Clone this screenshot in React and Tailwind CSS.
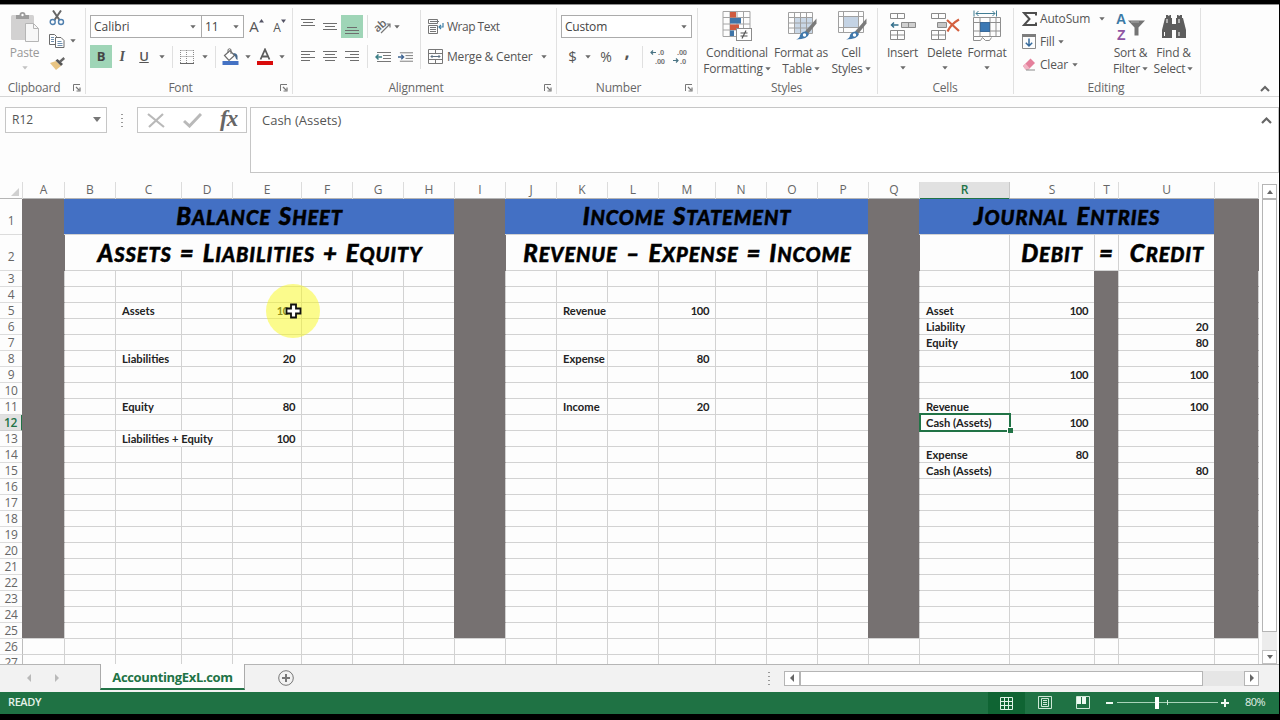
import React from 'react';
import clsx from 'clsx';

const COLUMNS = ['A', 'B', 'C', 'D', 'E', 'F', 'G', 'H', 'I', 'J', 'K', 'L', 'M', 'N', 'O', 'P', 'Q', 'R', 'S', 'T', 'U', 'V'];

const ROW_GRID =
  'grid grid-cols-[23px_42px_51px_66px_51px_69px_51px_51px_51px_51px_51px_51px_51px_57px_51px_51px_51px_51px_90px_85px_24px_96px_44px]';

const CELLS = {
  C5: 'Assets', E5: '100', K5: 'Revenue', M5: '100', R5: 'Asset', S5: '100',
  R6: 'Liability', U6: '20',
  R7: 'Equity', U7: '80',
  C8: 'Liabilities', E8: '20', K8: 'Expense', M8: '80',
  S9: '100', U9: '100',
  C11: 'Equity', E11: '80', K11: 'Income', M11: '20', R11: 'Revenue', U11: '100',
  R12: 'Cash (Assets)', S12: '100',
  C13: 'Liabilities + Equity', E13: '100',
  R14: 'Expense', S14: '80',
  R15: 'Cash (Assets)', U15: '80',
};

// text in these cells runs over the border on their right
const OVERFLOWING = ['C13', 'K5'];

const isDivider = (col, row) =>
  row <= 25 && (['A', 'I', 'Q', 'V'].includes(col) || (col === 'T' && row > 2));

/* ---------- small pieces ---------- */

const Caret = ({ className = '' }) => (
  <svg viewBox="0 0 6 4" className={clsx('w-[6px] h-[4px] shrink-0', className)}>
    <path d="M0.3 0.3h5.4L3 3.5z" fill="#6b6b6b" />
  </svg>
);

const Slot = ({ className = '', children }) => (
  <div className={clsx('flex h-full shrink-0 items-center justify-center', className)}>{children}</div>
);

const Separator = ({ className = '' }) => <div className={clsx('w-px shrink-0 bg-[#e0e0e0]', className)} />;

const Launcher = () => (
  <svg viewBox="0 0 8 8" className="absolute right-[4px] bottom-[2px] h-[8px] w-[8px]" fill="none" stroke="#777">
    <path d="M0.5 7V0.5H7" />
    <path d="M3 3l3 3M7 3.5V7H3.5" strokeWidth="1.2" />
  </svg>
);

const Group = ({ label, width, launcher, labelClass = '', children }) => (
  <div className={clsx('relative h-[86px] shrink-0 border-r border-[#e1e1e1]', width)}>
    {children}
    <div className={clsx('absolute inset-x-0 -bottom-px text-center leading-[14px] text-[#666]', labelClass)}>{label}</div>
    {launcher && <Launcher />}
  </div>
);

const Lines = ({ rows, className = '' }) => (
  <svg viewBox="0 0 14 14" className={clsx('h-[14px] w-[14px]', className)} stroke="#6e6e6e">
    {rows.map(([x1, x2, y]) => (
      <path key={y} d={`M${x1} ${y}H${x2}`} />
    ))}
  </svg>
);

const BigButton = ({ icon, lines, className = '', caretBelow }) => (
  <div className={clsx('flex shrink-0 flex-col items-center', className)}>
    <div className="flex h-[36px] items-center justify-center">{icon}</div>
    <div className="mt-[1px] leading-[16px] whitespace-nowrap">{lines[0]}</div>
    <div className="flex h-[16px] items-center gap-[2px] leading-[16px] whitespace-nowrap">
      {!caretBelow && lines[1]}
      <Caret className={caretBelow ? '-mt-[2px]' : '-mt-[1px]'} />
    </div>
  </div>
);

/* ---------- icons ---------- */

const PasteIcon = () => (
  <svg viewBox="0 0 30 30" className="h-[30px] w-[30px]">
    <rect x="1" y="3" width="23" height="25" rx="1.5" fill="#d2d1d1" />
    <path d="M6 3h3.500a3 3 0 0 1 6 0H19v4H6z" fill="#9c9c9c" />
    <circle cx="12.500" cy="3" r="1.200" fill="#fff" />
    <path d="M15.500 11.500h8l5 5v13h-13z" fill="#f7f7f7" stroke="#b5b5b5" />
    <path d="M23.500 11.500v5h5" fill="none" stroke="#b5b5b5" />
  </svg>
);

const ScissorsIcon = () => (
  <svg viewBox="0 0 16 16" className="h-[16px] w-[16px]" fill="none">
    <path d="M4 0.500L10.500 10M12 0.500L5.500 10" stroke="#666" strokeWidth="2" />
    <circle cx="3.700" cy="12" r="2.500" stroke="#4f7fae" strokeWidth="1.400" />
    <circle cx="12" cy="12" r="2.500" stroke="#4f7fae" strokeWidth="1.400" />
  </svg>
);

const CopyIcon = () => (
  <svg viewBox="0 0 16 16" className="h-[16px] w-[16px]" fill="#fff" stroke="#6c6c6c">
    <path d="M0.500 1.500h5l2 2v8h-7z" />
    <path d="M2 4.500h3M2 6.500h3M2 8.500h3" stroke="#6f8fae" />
    <path d="M6.500 4.500h5.500l3 3v7H6.500z" />
    <path d="M8.500 8.500h4M8.500 10.500h5M8.500 12.500h5" stroke="#6f8fae" />
  </svg>
);

const BrushIcon = () => (
  <svg viewBox="0 0 17 14" className="h-[14px] w-[17px]">
    <path d="M1 7l6-2 5 5-5 4z" fill="#e9c583" />
    <path d="M6.500 4.500l2-1.500 5.500 5-2 2z" fill="#555" />
    <path d="M10 5l4.500-4 1.500 2-4 3.500z" fill="#666" />
  </svg>
);

const BordersIcon = () => (
  <svg viewBox="0 0 14 14" className="h-[14px] w-[14px]" fill="none" stroke="#8a8a8a">
    <path d="M0.500 0.500h13M0.500 6.500h13M0.500 0v13M6.500 0v13M13.500 0v13" strokeDasharray="1 1" />
    <path d="M0 13.500h14" stroke="#666" />
  </svg>
);

const FillIcon = () => (
  <svg viewBox="0 0 17 17" className="h-[17px] w-[17px]">
    <path d="M2.500 7.500L8 2.500l4.500 5-5.500 5z" fill="#fff" stroke="#6d6d6d" strokeWidth="1.200" />
    <path d="M6 5V1.500q1.500-1.500 3 0V6" fill="none" stroke="#6d6d6d" />
    <path d="M11 5q4 0 4.500 3v4q-2-1-2.500-4z" fill="#47678a" />
    <rect x="0.500" y="13" width="16" height="4" fill="#4472c4" />
  </svg>
);

const FontColorIcon = () => (
  <svg viewBox="0 0 16 17" className="h-[17px] w-[16px]">
    <path d="M3.500 11.500L8 1.500l4.500 10M5 8.500h6" fill="none" stroke="#5c5c5c" strokeWidth="1.800" />
    <rect y="13" width="16" height="4" fill="#d90b0b" />
  </svg>
);

const OrientationIcon = () => (
  <svg viewBox="0 0 17 16" className="h-[16px] w-[17px] overflow-visible">
    <text x="0" y="11" fontSize="11" fontFamily="Open Sans, sans-serif" fontWeight="600" fill="#666" transform="rotate(-42 5 9)">ab</text>
    <path d="M6 14L15 5M11.500 5H15v3.500" fill="none" stroke="#777" strokeWidth="1.200" />
  </svg>
);

const IndentIcon = ({ out }) => (
  <svg viewBox="0 0 16 12" className="h-[12px] w-[16px]" fill="none">
    <path d="M2 1.500h14M8 4.500h8M8 7.500h8M2 10.500h14" stroke="#777" />
    <path d={out ? 'M7 6H1M3.500 3.500L1 6l2.500 2.500' : 'M0 6h6M3.500 3.500L6 6L3.500 8.500'} stroke={out ? '#3d7f86' : '#3f6593'} strokeWidth="1.500" />
  </svg>
);

const WrapIcon = () => (
  <svg viewBox="0 0 16 16" className="h-[16px] w-[16px]" fill="none" stroke="#767676">
    <path d="M0.500 0.500h9v4h-9zM2 2.500h9M0.500 6.500h9v8h-9zM2 8.500h6M2 10.500h6M2 12.500h6" />
    <path d="M15 4v4h-3.500M13 6l-2 2 2 2" stroke="#3f7fa5" strokeWidth="1.200" />
  </svg>
);

const MergeIcon = () => (
  <svg viewBox="0 0 16 16" className="h-[16px] w-[16px]" fill="none" stroke="#777">
    <path d="M0.500 0.500h14v14h-14zM0.500 4.500h14M0.500 10.500h14M7.500 0v4M7.500 11v4" />
    <path d="M3 7.500h9M4.500 6L3 7.500 4.500 9M10.500 6L12 7.500 10.500 9" stroke="#5d6f80" />
  </svg>
);

const DecimalIcon = ({ top, bottom, left }) => (
  <svg viewBox="0 0 16 15" className="h-[15px] w-[16px] overflow-visible" fontSize="7.500" fontFamily="Liberation Sans, sans-serif" fontWeight="700" fill="#777">
    <text x={left ? 8 : 5} y="6">{top}</text>
    <text x={left ? 5 : 8} y="14.500">{bottom}</text>
    <path d={left ? 'M6 3.500H1M3 1.500L1 3.500l2 2' : 'M1 11.500h5M4 9.500l2 2-2 2'} fill="none" stroke="#4a7484" strokeWidth="1.200" />
  </svg>
);

const ConditionalIcon = () => (
  <svg viewBox="0 0 30 31" className="h-[31px] w-[30px]">
    <path d="M1 0.500h27v25H1zM1 6.500h27M1 13h27M1 19h27M8 0v25M15 0v25M21.500 0v25" fill="none" stroke="#a4a4a4" />
    <rect x="8" y="1" width="6" height="5.500" fill="#cf5b3f" />
    <rect x="8" y="7" width="11" height="5.500" fill="#3f75a8" />
    <rect x="8" y="13.500" width="9" height="5.500" fill="#cf5b3f" />
    <rect x="8" y="19.500" width="4" height="5.500" fill="#3f75a8" />
    <rect x="14.500" y="17.500" width="15" height="12" fill="#fff" stroke="#8c8c8c" />
    <path d="M18.500 22h7M18.500 25h7M24 19.500l-4 8" stroke="#555" strokeWidth="1.200" />
  </svg>
);

const StyleBrush = () => (
  <>
    <path d="M28.500 7.500v5L20 23l-3-2.500z" fill="#7a7a7a" />
    <path d="M18.500 20.500l2.500 2.500q-1 5-13 5.500 4-1.500 4-4.500 2-4 6.500-3.500z" fill="#4078ab" />
    <circle cx="16.500" cy="24" r="1.700" fill="#fff" />
  </>
);

const TableIcon = () => (
  <svg viewBox="0 0 30 30" className="ml-[3px] h-[30px] w-[30px]">
    <rect x="6" y="7" width="19" height="15" fill="#c9d7e6" />
    <path d="M0.500 1.500h24v21h-24zM0.500 6.500h24M0.500 12h24M0.500 17h24M6.500 1.500v21M12.500 1.500v21M18.500 1.500v21" fill="none" stroke="#a0a0a0" />
    <StyleBrush />
  </svg>
);

const CellStyleIcon = () => (
  <svg viewBox="0 0 30 30" className="ml-[3px] h-[30px] w-[30px]">
    <path d="M0.500 0.500h25v21h-25zM0.500 5.500h25M0.500 16.500h25M5.500 0v21M20.500 0v21" fill="none" stroke="#a0a0a0" />
    <rect x="6" y="6" width="14" height="10" fill="#c4d3e4" />
    <StyleBrush />
  </svg>
);

const InsertIcon = () => (
  <svg viewBox="0 0 28 29" className="h-[29px] w-[28px]" fill="none" stroke="#8a8a8a">
    <path d="M1.500 1.500h14v5h-14zM8.500 1.500v5M1.500 18.500h14v9h-14zM8.500 18.500v9M1.500 23h14" />
    <path d="M12.500 10.500h14v5h-14zM19.500 10.500v5" fill="#cfcfcf" />
    <path d="M9.500 13H2.500M5 10.500L2.500 13 5 15.500" stroke="#35708c" strokeWidth="1.500" />
  </svg>
);

const DeleteIcon = () => (
  <svg viewBox="0 0 30 29" className="h-[29px] w-[30px]" fill="none" stroke="#8a8a8a">
    <path d="M1.500 1.500h14v5h-14zM8.500 1.500v5M1.500 18.500h14v9h-14zM8.500 18.500v9M1.500 23h14" />
    <path d="M7.500 10.500h9v5h-9z" fill="#c6c6c6" />
    <path d="M17 8l12 11M29 7.500Q21 12 17.500 19.500" stroke="#d4603f" strokeWidth="2.200" />
  </svg>
);

const FormatIcon = () => (
  <svg viewBox="0 0 28 32" className="h-[32px] w-[28px]" fill="none" stroke="#8f8f8f">
    <path d="M0.500 7.500h27v19h-27zM0.500 12.500h27M0.500 21h27M7 7.500v19M17 7.500v19M23 7.500v19" />
    <path d="M0.500 26.500v4h7l2-3 3 3h4l2-3" />
    <rect x="7.500" y="12.500" width="9" height="9" fill="#3b78b4" stroke="#3b6a99" />
    <path d="M3 3.500h19M5.500 1L3 3.500 5.500 6M19.500 1L22 3.500 19.500 6M1 0.500v6M23.500 0.500v6" stroke="#417d93" />
  </svg>
);

const SigmaIcon = () => (
  <svg viewBox="0 0 15 14" className="h-[14px] w-[15px]" fill="none" stroke="#4e4e4e" strokeWidth="2">
    <path d="M14 3.500V1H2l5.500 6L2 13h12v-2.500" />
  </svg>
);

const FillDownIcon = () => (
  <svg viewBox="0 0 14 15" className="h-[15px] w-[14px]" fill="none">
    <path d="M0.500 0.500h13v14H0.500z" stroke="#8a8a8a" />
    <rect width="14" height="3" fill="#7d7d7d" />
    <path d="M7 4.500v7.500M3.800 8.800L7 12l3.200-3.200" stroke="#35699b" strokeWidth="1.500" />
  </svg>
);

const EraserIcon = () => (
  <svg viewBox="0 0 14 13" className="h-[13px] w-[14px]">
    <path d="M1 8L8.500 0.500l4.500 4.500-6.500 6.500H3.500z" fill="#e5809c" />
    <path d="M1 8l2.500-2.500 4 4.500-1.500 1.500H3.500z" fill="#f1b4c4" />
    <path d="M4 12h9" stroke="#8a8a8a" />
  </svg>
);

const SortFilterIcon = () => (
  <svg viewBox="0 0 29 29" className="h-[29px] w-[29px] overflow-visible" fontFamily="Liberation Sans, sans-serif" fontWeight="700" fontSize="14">
    <text x="0" y="11.500" fill="#3c7aa6">A</text>
    <text x="1" y="28" fill="#8f55a3">Z</text>
    <path d="M12 8.500h17l-6.500 7v8h-4v-8z" fill="#747474" />
    <path d="M15 10h8" stroke="#aaa" />
  </svg>
);

const BinocularsIcon = () => (
  <svg viewBox="0 0 26 25" className="h-[25px] w-[26px]" fill="#5d5d5d">
    <path d="M5 1h5v3h1v6h4V4h1V1h5v3h1l3 12v8H15v-8h-4v8H1v-8L4 4h1z" />
    <path d="M3.500 18v4M18 18v4M6 5v4M18 5v4" stroke="#fff" />
    <path d="M7 1.500h1.500M17.500 1.500H19" stroke="#ccc" />
  </svg>
);

/* ---------- ribbon ---------- */

const Ribbon = () => (
  <div className="flex h-[93px] shrink-0 border-t border-b border-t-[#8f8f8f] border-b-[#d5d5d5] pt-[3px] text-[12px] tracking-[-0.2px] text-[#555]">
    <Group label="Clipboard" width="w-[86px]" labelClass="pr-[17px]" launcher>
      <div className="flex">
        <div className="flex w-[49px] flex-col items-center pt-[4px] text-[#999]">
          <PasteIcon />
          <div className="mt-[3px] h-[16px] leading-[16px]">Paste</div>
          <Caret className="mt-[5px] opacity-40" />
        </div>
        <div className="flex flex-col pt-[2px]">
          <ScissorsIcon />
          <div className="mt-[7px] flex items-center gap-[5px]">
            <CopyIcon />
            <Caret />
          </div>
          <div className="mt-[7px]"><BrushIcon /></div>
        </div>
      </div>
    </Group>

    <Group label="Font" width="w-[207px]" labelClass="pr-[17px]" launcher>
      <div className="flex h-[23px] pl-[4px] mt-[7px]">
        <div className="flex w-[112px] items-center justify-between border border-[#ababab] bg-white pr-[5px] pl-[3px] tracking-normal text-[#444]">
          Calibri <Caret />
        </div>
        <div className="-ml-px flex w-[43px] items-center justify-between border border-[#ababab] bg-white pr-[4px] pl-[3px] text-[#444]">
          11 <Caret />
        </div>
        <Slot className="w-[25px]">
          <span className="text-[15px]">A</span>
          <svg viewBox="0 0 5 4" className="mb-[12px] h-[4px] w-[5px]"><path d="M0 3.500L2.500 0 5 3.500z" fill="#556" /></svg>
        </Slot>
        <Slot className="w-[21px]">
          <span className="mt-[2px] text-[12px]">A</span>
          <svg viewBox="0 0 5 4" className="mb-[12px] h-[4px] w-[5px]"><path d="M0 0.500h5L2.500 4z" fill="#556" /></svg>
        </Slot>
      </div>
      <div className="mt-[7px] flex h-[23px] items-center pl-[4px]">
        <Slot className="w-[22px] bg-[#9fd5b7] text-[13px] font-bold text-[#444]">B</Slot>
        <Slot className="w-[20px] font-['Liberation_Serif',serif] text-[14px] font-bold italic">I</Slot>
        <Slot className="w-[24px] text-[13px] font-semibold underline">U</Slot>
        <Slot className="w-[11px]"><Caret /></Slot>
        <Separator className="ml-[5px] h-[22px]" />
        <Slot className="w-[28px]"><BordersIcon /></Slot>
        <Slot className="w-[7px]"><Caret /></Slot>
        <Separator className="ml-[7px] h-[22px]" />
        <Slot className="w-[28px]"><FillIcon /></Slot>
        <Slot className="w-[7px]"><Caret /></Slot>
        <Slot className="w-[27px]"><FontColorIcon /></Slot>
        <Slot className="w-[7px]"><Caret /></Slot>
      </div>
    </Group>

    <Group label="Alignment" width="w-[264px]" labelClass="pr-[17px]" launcher>
      <div className="flex pt-[2px]">
        <div className="pt-[5px] pl-[4px]">
          <div className="flex h-[23px] w-[123px]">
            <Slot className="w-[22px]"><Lines rows={[[0, 14, 3.5], [2, 12, 6.5], [0, 14, 9.5]]} className="mb-[8px]" /></Slot>
            <Slot className="w-[22px]"><Lines rows={[[0, 14, 3.5], [2, 12, 6.5], [0, 14, 9.5]]} /></Slot>
            <Slot className="w-[22px] bg-[#9fd5b7]"><Lines rows={[[2, 12, 3.5], [0, 14, 6.5], [0, 14, 9.5]]} className="mt-[8px]" /></Slot>
            <Separator className="ml-[4px]" />
            <Slot className="w-[31px]"><OrientationIcon /></Slot>
            <Caret className="-ml-[5px] mt-[10px]" />
          </div>
          <div className="mt-[7px] flex h-[23px]">
            <Slot className="w-[22px]"><Lines rows={[[0, 14, 1.5], [0, 9, 4.5], [0, 14, 7.5], [0, 9, 10.5]]} /></Slot>
            <Slot className="w-[22px]"><Lines rows={[[0, 14, 1.5], [2, 12, 4.5], [0, 14, 7.5], [2, 12, 10.5]]} /></Slot>
            <Slot className="w-[22px]"><Lines rows={[[0, 14, 1.5], [5, 14, 4.5], [0, 14, 7.5], [5, 14, 10.5]]} /></Slot>
            <Separator className="ml-[4px]" />
            <Slot className="w-[30px]"><IndentIcon out /></Slot>
            <Slot className="w-[15px]"><IndentIcon /></Slot>
          </div>
        </div>
        <Separator className="h-[59px]" />
        <div className="pt-[5px] pl-[7px]">
          <div className="flex h-[23px] items-center gap-[3px] tracking-[-0.5px]">
            <WrapIcon /> Wrap Text
          </div>
          <div className="mt-[7px] flex h-[23px] items-center gap-[3px] whitespace-nowrap">
            <MergeIcon /> <span className="w-[91px]">Merge &amp; Center</span> <Caret />
          </div>
        </div>
      </div>
    </Group>

    <Group label="Number" width="w-[141px]" labelClass="pr-[17px]" launcher>
      <div className="mt-[7px] ml-[4px] flex h-[23px] w-[131px] items-center justify-between border border-[#ababab] bg-white pr-[4px] pl-[3px] text-[#444]">
        Custom <Caret />
      </div>
      <div className="mt-[7px] flex h-[23px] items-center pl-[4px]">
        <Slot className="w-[23px] text-[15px]">$</Slot>
        <Slot className="w-[8px]"><Caret /></Slot>
        <Slot className="w-[28px] text-[14px]">%</Slot>
        <Slot className="w-[14px] pb-[10px] text-[18px] font-bold">,</Slot>
        <Separator className="ml-[8px] h-[22px]" />
        <Slot className="w-[30px]"><DecimalIcon left top=".0" bottom=".00" /></Slot>
        <Slot className="w-[14px]"><DecimalIcon top=".00" bottom=".0" /></Slot>
      </div>
    </Group>

    <Group label="Styles" width="w-[180px]" labelClass="pr-[2px]">
      <div className="flex">
        <BigButton className="w-[78px]" icon={<ConditionalIcon />} lines={['Conditional', 'Formatting']} />
        <BigButton className="w-[50px]" icon={<TableIcon />} lines={['Format as', 'Table']} />
        <BigButton className="w-[50px]" icon={<CellStyleIcon />} lines={['Cell', 'Styles']} />
      </div>
    </Group>

    <Group label="Cells" width="w-[136px]" labelClass="pr-[1px]">
      <div className="flex pl-[3px]">
        <BigButton className="w-[43px]" icon={<InsertIcon />} lines={['Insert']} caretBelow />
        <BigButton className="w-[41px]" icon={<DeleteIcon />} lines={['Delete']} caretBelow />
        <BigButton className="w-[44px]" icon={<FormatIcon />} lines={['Format']} caretBelow />
      </div>
    </Group>

    <Group label="Editing" width="w-[187px]" labelClass="pr-[2px]">
      <div className="flex">
        <div className="w-[95px] pl-[8px]">
          <div className="flex h-[22px] items-center gap-[3px]"><SigmaIcon /><span className="w-[56px]">AutoSum</span><Caret /></div>
          <div className="flex h-[23px] items-center gap-[4px]"><FillDownIcon />Fill<Caret /></div>
          <div className="flex h-[23px] items-center gap-[4px]"><EraserIcon />Clear<Caret /></div>
        </div>
        <BigButton className="w-[43px]" icon={<SortFilterIcon />} lines={['Sort &', 'Filter']} />
        <BigButton className="w-[43px]" icon={<BinocularsIcon />} lines={['Find &', 'Select']} />
      </div>
    </Group>

    <svg viewBox="0 0 10 7" className="mt-[77px] mr-[9px] ml-auto h-[7px] w-[10px]" fill="none" stroke="#666" strokeWidth="2">
      <path d="M1 6l4-4 4 4" />
    </svg>
  </div>
);

/* ---------- formula bar ---------- */

const Dots = () => (
  <div className="flex flex-col gap-[3px]">
    {[0, 1, 2, 3].map((n) => <div key={n} className="h-[1px] w-[2px] bg-[#999]" />)}
  </div>
);

const FormulaBar = () => (
  <div className="flex h-[85px] shrink-0 items-start pt-[10px] pl-[5px] text-[12px] text-[#555]">
    <div className="flex h-[26px] w-[102px] items-center justify-between border border-[#c6c6c6] bg-white pr-[5px] pl-[6px]">
      <span>R12</span>
      <svg viewBox="0 0 8 5" className="-mt-[2px] h-[5px] w-[8px]"><path d="M0 0h8L4 5z" fill="#777" /></svg>
    </div>
    <div className="mt-[7px] ml-[14px] w-[16px]"><Dots /></div>
    <div className="flex h-[26px] w-[110px] items-center border border-[#c6c6c6] bg-white pl-[9px]">
      <svg viewBox="0 0 18 15" className="h-[15px] w-[18px]" fill="none" stroke="#b9b9b9" strokeWidth="2.2"><path d="M1 1l16 13M16 1L2 14" /></svg>
      <svg viewBox="0 0 19 15" className="ml-[18px] h-[15px] w-[19px]" fill="none" stroke="#b9b9b9" strokeWidth="3"><path d="M1 8l5.500 5L18 1" /></svg>
      <span className="ml-[18px] pb-[3px] font-['Liberation_Serif',serif] text-[23px] leading-[22px] font-bold tracking-[-1px] text-[#666] italic">fx</span>
    </div>
    <div className="ml-[3px] flex h-[66px] flex-1 justify-between border border-[#c6c6c6] bg-white pt-[3px] pr-[6px] pl-[11px]">
      <span className="text-[13px] leading-[19px]">Cash (Assets)</span>
      <svg viewBox="0 0 11 8" className="mt-[5px] h-[8px] w-[11px]" fill="none" stroke="#666" strokeWidth="2.2"><path d="M1 7l4.500-4.500L10 7" /></svg>
    </div>
  </div>
);

/* ---------- sheet ---------- */

const Marker = ({ children }) => (
  <span className="flex justify-center gap-[8px] font-['Lato',sans-serif] text-[20px] leading-none font-black tracking-[0.9px] text-black uppercase italic [-webkit-text-stroke:0.5px_#000]">
    {children.split(' ').map((word, i) => (
      <span key={i} className="inline-block first-letter:text-[24px]">{word}</span>
    ))}
  </span>
);

const RowNumber = ({ row, active }) => (
  <div
    className={clsx(
      "flex items-end justify-center border-b font-['Open_Sans',sans-serif] text-[12px] leading-[15px] tracking-[-0.4px]",
      row < 3 && 'pb-[6px]',
      active
        ? 'border-r-2 border-b-[#d0d0d0] border-r-[#217346] bg-[#e1e1e1] font-semibold text-[#217346]'
        : 'border-r border-r-[#bdbdbd] border-b-[#dcdcdc] font-normal text-[#666]',
    )}
  >
    {row}
  </div>
);

const Divider = () => <div className="relative -ml-px border-r border-[#767171] bg-[#767171]" />;

const Cell = ({ col, row }) => {
  const value = CELLS[col + row];
  const numeric = value && /^\d+$/.test(value);
  return (
    <div
      className={clsx(
        'relative border-r border-b px-[6px] leading-[15px] whitespace-nowrap',
        isDivider(col, row) ? '-ml-px border-r-[#d2d2d2] bg-[#767171]' : 'border-[#d2d2d2]',
        isDivider(col, row) && (row === 25 ? 'border-b-[#d2d2d2]' : 'border-b-[#767171]'),
        numeric && 'text-right tracking-[-0.4px]',
        OVERFLOWING.includes(col + row) && 'border-r-transparent',
      )}
    >
      {value}
      {col === 'R' && row === 12 && (
        <div className="absolute -top-[2px] -right-[2px] -bottom-[2px] -left-[1px] z-10 border-2 border-[#217346]">
          <div className="absolute -right-[4px] -bottom-[3px] h-[6px] w-[6px] border-t border-l border-white bg-[#217346]" />
        </div>
      )}
    </div>
  );
};

const BLUE = 'relative -ml-px border-b border-[#d2d2d2] bg-[#4370c4] bg-clip-padding pt-[5px]';

const Sheet = () => (
  <div className="relative h-[482px] w-[1259px] overflow-hidden font-['Lato',sans-serif] text-[11.2px] font-bold text-[#222]">
    {/* Column letters */}
    <div className={clsx(ROW_GRID, "h-[17px] border-b border-[#b5b5b5] font-['Open_Sans',sans-serif] text-[12px] font-normal text-[#666]")}>
      <div className="flex items-end justify-end border-r border-[#dcdcdc] p-[3px]">
        <svg viewBox="0 0 8 8" className="h-[8px] w-[8px]"><path d="M8 0v8H0z" fill="#d0d0d0" /></svg>
      </div>
      {COLUMNS.map((col) => (
        <div
          key={col}
          className={clsx(
            'border-r text-center leading-[16px]',
            col === 'R' ? '-mb-px border-b-2 border-r-[#c8c8c8] border-b-[#217346] bg-[#e1e1e1] font-semibold text-[#217346]' : 'border-[#dcdcdc]',
          )}
        >
          {col !== 'V' && col}
        </div>
      ))}
    </div>

    {/* Titles */}
    <div className={clsx(ROW_GRID, 'h-[36px]')}>
      <RowNumber row={1} />
      <Divider />
      <div className={clsx(BLUE, 'col-span-7')}><Marker>Balance Sheet</Marker></div>
      <Divider />
      <div className={clsx(BLUE, 'col-span-7')}><Marker>Income Statement</Marker></div>
      <Divider />
      <div className={clsx(BLUE, 'col-span-4')}><Marker>Journal Entries</Marker></div>
      <Divider />
    </div>
    <div className={clsx(ROW_GRID, 'h-[36px]')}>
      <RowNumber row={2} />
      <Divider />
      <div className="col-span-7 border-b border-[#d2d2d2] pt-[6px]"><Marker>Assets = Liabilities + Equity</Marker></div>
      <Divider />
      <div className="col-span-7 border-b border-[#d2d2d2] pt-[6px]"><Marker>Revenue – Expense = Income</Marker></div>
      <Divider />
      <div className="border-r border-b border-[#d2d2d2]" />
      <div className="border-r border-b border-[#d2d2d2] pt-[6px]"><Marker>Debit</Marker></div>
      <div className="border-r border-b border-[#d2d2d2] pt-[6px]"><Marker>=</Marker></div>
      <div className="border-b border-[#d2d2d2] pt-[6px]"><Marker>Credit</Marker></div>
      <Divider />
    </div>

    {Array.from({ length: 25 }, (_, i) => i + 3).map((row) => (
      <div key={row} className={clsx(ROW_GRID, 'h-[16px]')}>
        <RowNumber row={row} active={row === 12} />
        {COLUMNS.map((col) => <Cell key={col} col={col} row={row} />)}
      </div>
    ))}

    {/* Highlighted mouse pointer */}
    <div className="absolute top-[102px] left-[266px] h-[54px] w-[54px] rounded-full bg-[#fafa1b]/50" />
    <svg viewBox="0 0 17 16" className="absolute top-[121px] left-[285px] h-[16px] w-[17px]">
      <path d="M6 1.500h5v4h4.500v5H11v4H6v-4H1.500v-5H6z" fill="#fff" stroke="#111" strokeWidth="1.800" />
    </svg>
  </div>
);

const Arrow = ({ d }) => (
  <svg viewBox="0 0 8 8" className="h-[8px] w-[8px]"><path d={d} fill="#666" /></svg>
);

const VerticalScroll = () => (
  <div className="mt-[2px] ml-[3px] flex h-[480px] w-[15px] flex-col bg-[#ececec]">
    <div className="flex h-[15px] items-center justify-center border border-[#b5b5b5] bg-white"><Arrow d="M1 6l3-4 3 4z" /></div>
    <div className="h-[433px] border border-[#b5b5b5] bg-white" />
    <div className="mt-auto flex h-[14px] items-center justify-center border border-[#c2c2c2] bg-white"><Arrow d="M1 2h6L4 6z" /></div>
  </div>
);

const SheetTabs = () => (
  <div className="relative flex h-[28px] shrink-0 items-center border-t border-[#b5b5b5] bg-[#f2f2f2] pb-px">
    <div className="flex w-[100px] gap-[20px] pl-[25px] opacity-40">
      <Arrow d="M6 0v8L2 4z" />
      <Arrow d="M2 0v8l4-4z" />
    </div>
    <div className="-mt-[3px] h-[26px] w-[145px] border-r border-b-2 border-l border-r-[#ababab] border-b-[#217346] border-l-[#ababab] bg-[#fdfdfd] text-center text-[13px] leading-[26px] font-bold tracking-[-0.35px] text-[#217346]">
      AccountingExL.com
    </div>
    <svg viewBox="0 0 16 16" className="ml-[33px] h-[16px] w-[16px]" fill="none" stroke="#777">
      <circle cx="8" cy="8" r="7.300" />
      <path d="M8 4v8M4 8h8" strokeWidth="2" />
    </svg>
    <div className="ml-auto"><Dots /></div>
    <div className="mr-[20px] ml-[14px] flex h-[15px] w-[475px] bg-[#e6e6e6]">
      <div className="flex w-[16px] items-center justify-center border border-[#b5b5b5] bg-white"><Arrow d="M6 0v8L2 4z" /></div>
      <div className="w-[403px] border border-[#b5b5b5] bg-white" />
      <div className="ml-auto flex w-[15px] items-center justify-center border border-[#b5b5b5] bg-white"><Arrow d="M2 0v8l4-4z" /></div>
    </div>
  </div>
);

const StatusBar = () => (
  <div className="flex h-[22px] shrink-0 items-center bg-[#1f7244] pr-[12px] pb-px pl-[8px] text-[11px] text-[#e3f1e8]">
    <span className="text-[11px] font-semibold tracking-[-0.4px]">READY</span>
    <div className="-mb-px ml-auto flex h-[22px] w-[37px] items-center justify-center bg-[#0f6433]">
      <svg viewBox="0 0 13 13" className="h-[13px] w-[13px]" fill="none" stroke="#dff3e6">
        <path d="M0.500 0.500h12v12h-12zM0.500 4.500h12M0.500 8.500h12M4.500 0v13M8.500 0v13" />
      </svg>
    </div>
    <svg viewBox="0 0 14 13" className="ml-[13px] h-[13px] w-[14px]" fill="none" stroke="#cfe8d8">
      <path d="M0.500 0.500h13v12h-13zM3.500 2.500h7v8h-7zM5 4.500h4M5 6.500h4M5 8.500h4" />
    </svg>
    <svg viewBox="0 0 14 13" className="ml-[24px] h-[13px] w-[14px]" fill="none" stroke="#cfe8d8">
      <path d="M0.500 0.500h13v12h-13z" />
      <path d="M1 1h4v7H1zM6 1h4v7H6z" fill="#eefaf2" stroke="none" />
    </svg>
    <div className="ml-[16px] h-[2px] w-[7px] bg-[#eefaf2]" />
    <div className="relative ml-[4px] flex h-[12px] w-[101px] items-center">
      <div className="h-px w-full bg-[#a9d3b9]" />
      <div className="absolute left-[38px] h-[12px] w-[4px] bg-white" />
      <div className="absolute left-[50px] h-[5px] w-px bg-[#cfe8d8]" />
    </div>
    <svg viewBox="0 0 8 8" className="ml-[3px] h-[8px] w-[8px]" stroke="#eefaf2" strokeWidth="2"><path d="M4 0v8M0 4h8" /></svg>
    <span className="ml-[16px] w-[22px] tracking-[-0.5px]">80%</span>
  </div>
);

export default function App() {
  return (
    <div className="h-[720px] w-[1280px] overflow-hidden bg-black pt-[4px] pr-px font-['Open_Sans',sans-serif]">
      <div className="flex h-[710px] flex-col bg-[#fdfdfd]">
        <Ribbon />
        <FormulaBar />
        <div className="flex h-[482px] shrink-0">
          <Sheet />
          <VerticalScroll />
        </div>
        <SheetTabs />
        <StatusBar />
      </div>
    </div>
  );
}
